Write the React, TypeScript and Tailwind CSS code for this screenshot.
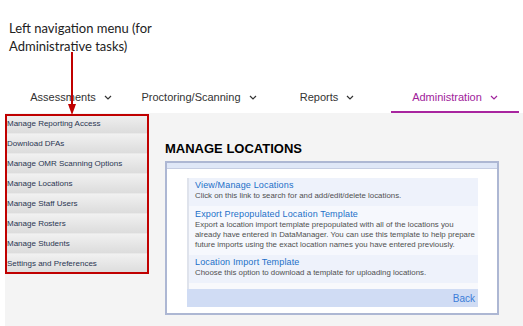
const navItems = ["Assessments", "Proctoring/Scanning", "Reports", "Administration"];

const menuItems = [
  "Manage Reporting Access",
  "Download DFAs",
  "Manage OMR Scanning Options",
  "Manage Locations",
  "Manage Staff Users",
  "Manage Rosters",
  "Manage Students",
  "Settings and Preferences",
];

function Chevron() {
  return (
    <svg width="8" height="5" viewBox="0 0 8 5" fill="none" className="shrink-0">
      <path d="M1 1l3 3 3-3" stroke="currentColor" strokeWidth="1.2" />
    </svg>
  );
}

export default function App() {
  return (
    <div className="relative w-[523px] h-[326px] overflow-hidden bg-white font-['Liberation_Sans',Arial,sans-serif]">
      {/* Annotation */}
      <div className="h-[84px] pt-[19px] pl-[9px] font-['Lato',sans-serif] text-[13px] leading-[18px] text-[#222]">
        <div>Left navigation menu (for</div>
        <div>Administrative tasks)</div>
      </div>

      {/* Arrow overlay */}
      <svg className="absolute left-[66px] top-[52px]" width="12" height="64" viewBox="0 0 12 64">
        <line x1="6" y1="0" x2="6" y2="54" stroke="#c00000" strokeWidth="2" />
        <path d="M2 52h8l-4 11z" fill="#c00000" />
      </svg>

      {/* Top navigation */}
      <div className="ml-[7px] grid grid-cols-[128px_128px_128px_128px] h-[29px]">
        {navItems.map((item, i) => {
          const active = i === 3;
          return (
            <div
              key={item}
              className={
                active
                  ? "flex items-center justify-center gap-[8px] border-b-2 border-[#a8259f] text-[11px] text-[#a0229b]"
                  : "flex items-center justify-center gap-[8px] border-b-2 border-transparent text-[11px] text-[#333]"
              }
            >
              <span>{item}</span>
              <Chevron />
            </div>
          );
        })}
      </div>

      {/* Body */}
      <div className="ml-[5px] h-[213px] bg-[#f4f4f4] flex gap-[16px]">
        {/* Left menu */}
        <div className="relative mt-px w-[144px] h-[160px] flex flex-col">
          {menuItems.map((m) => (
            <div
              key={m}
              className="h-[20px] flex items-center pl-[2px] bg-gradient-to-b from-[#f1f1f1] to-[#dcdcdc] border-b border-[#e9e9e9] text-[8px] text-[#2a3652]"
            >
              {m}
            </div>
          ))}
          <div className="absolute inset-0 border-2 border-[#c00000] pointer-events-none" />
        </div>

        {/* Main content */}
        <div className="pt-[28px]">
          <h1 className="text-[13px] leading-[16px] font-bold text-black mb-[4px]">MANAGE LOCATIONS</h1>
          <div className="w-[334px] h-[154px] border-2 border-[#adb7d3] bg-white flex flex-col">
            <div className="h-[6px] bg-[#dfe7f7] border-b border-[#c5cde2]" />
            <div className="pt-[9px] pl-[20px] pr-[19px]">
              <div className="border-l-2 border-[#dfe3ec]">
                <div className="bg-[#eef2fb] pt-px pb-[5px] pl-[6px]">
                  <div className="text-[9px] leading-[12px] tracking-[0.15px] text-[#2370c8]">View/Manage Locations</div>
                  <div className="text-[7.85px] leading-[10px] text-[#505050] whitespace-nowrap">
                    Click on this link to search for and add/edit/delete locations.
                  </div>
                </div>
                <div className="bg-[#f6f8fd] pt-[2px] pb-[5px] pl-[6px]">
                  <div className="text-[9px] leading-[12px] tracking-[0.15px] text-[#2370c8]">
                    Export Prepopulated Location Template
                  </div>
                  <div className="text-[7.85px] leading-[10px] text-[#505050] whitespace-nowrap">
                    <div>Export a location import template prepopulated with all of the locations you</div>
                    <div>already have entered in DataManager. You can use this template to help prepare</div>
                    <div>future imports using the exact location names you have entered previously.</div>
                  </div>
                </div>
                <div className="bg-[#eef2fb] pt-px pb-[5px] pl-[6px]">
                  <div className="text-[9px] leading-[12px] tracking-[0.15px] text-[#2370c8]">Location Import Template</div>
                  <div className="text-[7.85px] leading-[10px] text-[#505050] whitespace-nowrap">
                    Choose this option to download a template for uploading locations.
                  </div>
                </div>
                <div className="h-[6px] bg-[#f8f9fc]" />
              </div>
              <div className="h-[18px] bg-[#d0dcf4] flex items-center justify-end pr-[3px] text-[10px] text-[#3b7dd8]">
                Back
              </div>
            </div>
          </div>
        </div>
      </div>
    </div>
  );
}
